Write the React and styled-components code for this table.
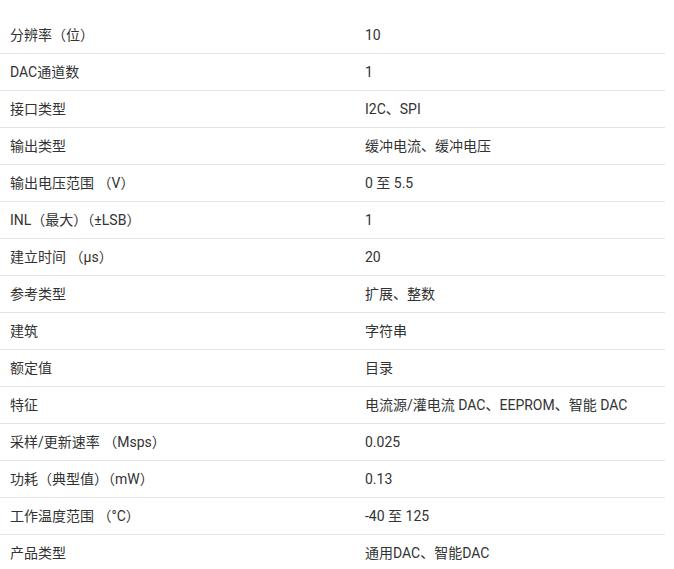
import React from 'react';
import styled, { createGlobalStyle } from 'styled-components';

const GlobalStyle = createGlobalStyle`
    body {
        margin: 0;
        background: #fff;
        font-family: Roboto, "Noto Sans CJK SC", sans-serif;
    }
`;

const Table = styled.div`
    width: 665px;
    padding-top: 17px;
    color: #333;
    font-size: 14px;
`;

const Row = styled.div`
    display: grid;
    grid-template-columns: 355px 1fr;
    height: 36px;
    align-items: center;
    border-bottom: ${props => props.last ? 'none' : '1px solid #e4e4e4'};
`;

const Cell = styled.div`
    padding-left: 10px;
    line-height: 18px;
`;

const specs = [
    ['分辨率（位）', '10'],
    ['DAC通道数', '1'],
    ['接口类型', 'I2C、SPI'],
    ['输出类型', '缓冲电流、缓冲电压'],
    ['输出电压范围 （V）', '0 至 5.5'],
    ['INL（最大）（±LSB）', '1'],
    ['建立时间 （µs）', '20'],
    ['参考类型', '扩展、整数'],
    ['建筑', '字符串'],
    ['额定值', '目录'],
    ['特征', '电流源/灌电流 DAC、EEPROM、智能 DAC'],
    ['采样/更新速率 （Msps）', '0.025'],
    ['功耗（典型值）（mW）', '0.13'],
    ['工作温度范围 （°C）', '-40 至 125'],
    ['产品类型', '通用DAC、智能DAC'],
];

const App = () => {
    return (
        <>
            <GlobalStyle />
            <Table>
                {specs.map(([label, value], i) => (
                    <Row key={label} last={i === specs.length - 1}>
                        <Cell>{label}</Cell>
                        <Cell>{value}</Cell>
                    </Row>
                ))}
            </Table>
        </>
    );
};

export default App;
